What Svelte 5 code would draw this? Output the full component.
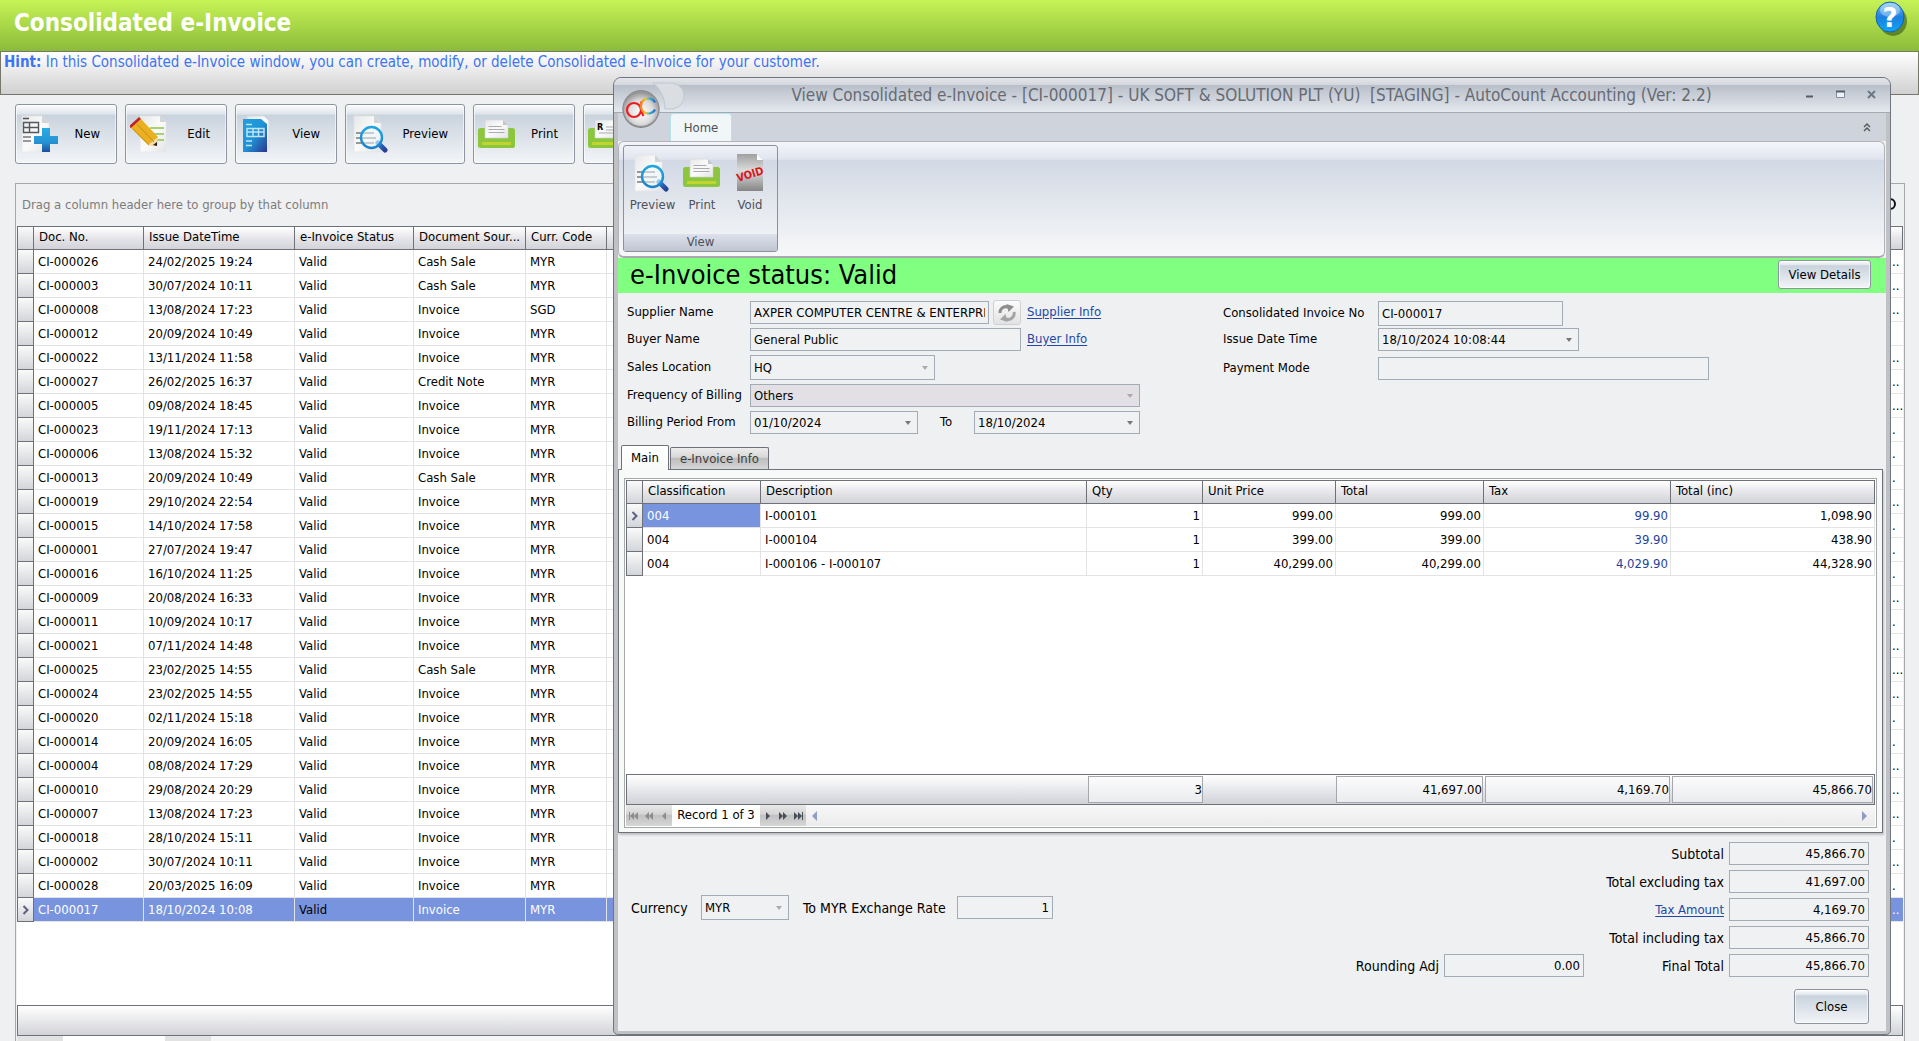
<script lang="ts">
  type Row = { no: string; issued: string; source: string; curr: string; tail: string };

  const raw: [string, string, string, string, number][] = [
    ['26', '24/02/2025 19:24', 'Cash Sale', 'MYR', 2],
    ['03', '30/07/2024 10:11', 'Cash Sale', 'MYR', 2],
    ['08', '13/08/2024 17:23', 'Invoice', 'SGD', 2],
    ['12', '20/09/2024 10:49', 'Invoice', 'MYR', 0],
    ['22', '13/11/2024 11:58', 'Invoice', 'MYR', 2],
    ['27', '26/02/2025 16:37', 'Credit Note', 'MYR', 2],
    ['05', '09/08/2024 18:45', 'Invoice', 'MYR', 3],
    ['23', '19/11/2024 17:13', 'Invoice', 'MYR', 1],
    ['06', '13/08/2024 15:32', 'Invoice', 'MYR', 1],
    ['13', '20/09/2024 10:49', 'Cash Sale', 'MYR', 1],
    ['19', '29/10/2024 22:54', 'Invoice', 'MYR', 2],
    ['15', '14/10/2024 17:58', 'Invoice', 'MYR', 1],
    ['01', '27/07/2024 19:47', 'Invoice', 'MYR', 1],
    ['16', '16/10/2024 11:25', 'Invoice', 'MYR', 1],
    ['09', '20/08/2024 16:33', 'Invoice', 'MYR', 2],
    ['11', '10/09/2024 10:17', 'Invoice', 'MYR', 1],
    ['21', '07/11/2024 14:48', 'Invoice', 'MYR', 2],
    ['25', '23/02/2025 14:55', 'Cash Sale', 'MYR', 3],
    ['24', '23/02/2025 14:55', 'Invoice', 'MYR', 2],
    ['20', '02/11/2024 15:18', 'Invoice', 'MYR', 1],
    ['14', '20/09/2024 16:05', 'Invoice', 'MYR', 1],
    ['04', '08/08/2024 17:29', 'Invoice', 'MYR', 2],
    ['10', '29/08/2024 20:29', 'Invoice', 'MYR', 2],
    ['07', '13/08/2024 17:23', 'Invoice', 'MYR', 2],
    ['18', '28/10/2024 15:11', 'Invoice', 'MYR', 1],
    ['02', '30/07/2024 10:11', 'Invoice', 'MYR', 2],
    ['28', '20/03/2025 16:09', 'Invoice', 'MYR', 1],
    ['17', '18/10/2024 10:08', 'Invoice', 'MYR', 2]
  ];

  const rows: Row[] = raw.map(([no, issued, source, curr, dots]) => ({
    no: `CI-0000${no}`,
    issued,
    source,
    curr,
    tail: '.'.repeat(dots)
  }));

  const lines = [
    { code: '004', desc: 'I-000101', qty: '1', price: '999.00', total: '999.00', tax: '99.90', inc: '1,098.90' },
    { code: '004', desc: 'I-000104', qty: '1', price: '399.00', total: '399.00', tax: '39.90', inc: '438.90' },
    { code: '004', desc: 'I-000106 - I-000107', qty: '1', price: '40,299.00', total: '40,299.00', tax: '4,029.90', inc: '44,328.90' }
  ];

  let selected = $state('CI-000017');
  let currentLine = $state(0);
</script>

<!-- Icons shared by the toolbar and the ribbon -->
{#snippet sheet()}
  <path d="M2 1h20l7 7v29H2z" fill="url(#paper)" stroke="#e2e4e6" stroke-width=".6" />
  <path d="M22 1v7h7z" fill="#d2d4d6" />
{/snippet}

{#snippet previewIcon()}
  <svg class="icon" viewBox="0 0 38 38" aria-hidden="true">
    {@render sheet()}
    <path d="M4 18h18M4 23h20M4 28h18" stroke="#77797c" stroke-width="1.6" />
    <path d="M26 28l7 7" stroke="url(#handle)" stroke-width="5" stroke-linecap="round" />
    <circle cx="19.500" cy="22.500" r="10.500" fill="#eef7fc" fill-opacity=".55" stroke="url(#lens)" stroke-width="2.400" />
  </svg>
{/snippet}

{#snippet printIcon(mark: string)}
  <svg class="icon" viewBox="0 0 38 38" aria-hidden="true">
    <rect x="0" y="13" width="37" height="20" rx="2.500" fill="#8cc63f" />
    <path d="M7 5h18l5 5v13H7z" fill="url(#paper)" stroke="#d3d5d7" stroke-width=".6" />
    <path d="M25 5v5h5z" fill="#c4c7c9" />
    {#if mark}
      <text x="9" y="15" class="mark">{mark}</text>
      <path d="M18 12h8M18 15h8M11 18h15" stroke="#a9abae" />
    {:else}
      <path d="M10.500 11.500h13M10.500 14.500h16M10.500 17.500h16" stroke="#a9abae" />
    {/if}
    <rect x="4" y="27" width="29" height="3" fill="#c0d62f" />
  </svg>
{/snippet}

{#snippet nav(kind: string, d: string)}
  <button class="nav" type="button" aria-label={kind}>
    <svg width="12" height="10" viewBox="0 0 12 10"><path {d} fill="currentColor" /></svg>
  </button>
{/snippet}

<svg class="defs" width="0" height="0" aria-hidden="true">
  <defs>
    <linearGradient id="paper" x1="0" y1="0" x2="1" y2="1">
      <stop offset="0" stop-color="#e6e7e8" /><stop offset=".5" stop-color="#fbfbfb" /><stop offset="1" stop-color="#e3e4e6" />
    </linearGradient>
    <linearGradient id="lens" x1="0" y1="0" x2="0" y2="1">
      <stop offset="0" stop-color="#22a6e0" /><stop offset="1" stop-color="#1b82cc" />
    </linearGradient>
    <linearGradient id="handle" x1="0" y1="0" x2="1" y2="1">
      <stop offset="0" stop-color="#2487cf" /><stop offset="1" stop-color="#2a3f97" />
    </linearGradient>
    <linearGradient id="blue" x1="0" y1="0" x2="1" y2="1">
      <stop offset="0" stop-color="#1f9fdf" /><stop offset=".5" stop-color="#1f93d6" /><stop offset="1" stop-color="#2a3690" />
    </linearGradient>
    <linearGradient id="cross" x1="0" y1="0" x2="0" y2="1">
      <stop offset="0" stop-color="#29abe2" /><stop offset=".6" stop-color="#2593d2" /><stop offset="1" stop-color="#1d4f9e" />
    </linearGradient>
    <linearGradient id="voidSheet" x1="0" y1="0" x2="0" y2="1">
      <stop offset="0" stop-color="#a0a0a0" /><stop offset=".45" stop-color="#dcdcdc" /><stop offset="1" stop-color="#858585" />
    </linearGradient>
    <radialGradient id="orb" cx=".5" cy=".6" r=".55">
      <stop offset="0" stop-color="#ffffff" /><stop offset=".6" stop-color="#dcdcdc" /><stop offset="1" stop-color="#949494" />
    </radialGradient>
    <linearGradient id="rainbow" x1="0" y1="0" x2="1" y2="0">
      <stop offset="0" stop-color="#f58220" /><stop offset=".35" stop-color="#f4c21c" /><stop offset=".6" stop-color="#39b6c9" /><stop offset="1" stop-color="#1b6fd0" />
    </linearGradient>
    <linearGradient id="ball" x1="0" y1="0" x2="0" y2="1">
      <stop offset="0" stop-color="#7fc0f2" /><stop offset=".5" stop-color="#1c7fe0" /><stop offset="1" stop-color="#12a6f5" />
    </linearGradient>
  </defs>
</svg>

<div class="page">
  <header class="banner">
    <h1>Consolidated e-Invoice</h1>
    <button class="help" type="button" aria-label="Help">
      <svg width="34" height="38" viewBox="0 0 34 38">
        <ellipse cx="18" cy="20" rx="14" ry="15" fill="#2c4a10" opacity=".55" />
        <ellipse cx="15" cy="16" rx="14" ry="15" fill="url(#ball)" stroke="#1263b5" />
        <ellipse cx="15" cy="9" rx="10" ry="7" fill="#fff" opacity=".35" />
        <text x="15" y="26" text-anchor="middle" class="question">?</text>
      </svg>
    </button>
  </header>

  <p class="hint"><b>Hint:</b> In this Consolidated e-Invoice window, you can create, modify, or delete Consolidated e-Invoice for your customer.</p>

  <div class="toolbar">
    <button class="tool glass" type="button">
      <svg class="icon" viewBox="0 0 38 38" aria-hidden="true">
        {@render sheet()}
        <path d="M3 3.500h6" stroke="#55585b" stroke-width="1.6" />
        <path d="M3.500 7.500h15v10h-15zM3.500 12.500h15M9.500 7.500v10" fill="none" stroke="#55585b" stroke-width="1.4" />
        <path d="M3 22h8M3 26h8" stroke="#77797c" stroke-width="1.6" />
        <path d="M22 13h8v8h8v8h-8v8h-8v-8h-8v-8h8z" fill="url(#cross)" />
      </svg>
      <span>New</span>
    </button>
    <button class="tool glass" type="button">
      <svg class="icon" viewBox="0 0 38 38" aria-hidden="true">
        <path d="M10 1h20l6 6v30H10z" fill="url(#paper)" stroke="#e2e4e6" stroke-width=".6" />
        <path d="M30 1v6h6z" fill="#d2d4d6" />
        <path d="M20 13h14M22 19h12M25 25h9" stroke="#8cc63f" stroke-width="1.6" />
        <path d="M0 12L10 3l18 19-1 9-9-1z" fill="#eab022" />
        <path d="M18 30l10-8-1 9z" fill="#f3dcae" />
        <path d="M23 30l4-3v4z" fill="#222" />
        <path d="M3 14l16 16M7 9l17 18" stroke="#c98f10" stroke-width="1" />
        <path d="M0 12L10 3" stroke="#c1202b" stroke-width="2.600" />
      </svg>
      <span>Edit</span>
    </button>
    <button class="tool glass" type="button">
      <svg class="icon" viewBox="0 0 38 38" aria-hidden="true">
        <path d="M7 1h17l5 5v28H7z" fill="url(#paper)" stroke="#d5d8da" stroke-width=".8" />
        <path d="M3 4h18l6 5v28H3z" fill="url(#blue)" />
        <path d="M6 9.500h6M6 26h6M6 30.500h6" stroke="#bfe4f6" stroke-width="1.5" />
        <path d="M7 13.500h17v8H7zM7 17h17M13 13.500v8M18.500 13.500v8" fill="none" stroke="#bfe4f6" stroke-width="1.5" />
      </svg>
      <span>View</span>
    </button>
    <button class="tool wide glass" type="button">{@render previewIcon()}<span>Preview</span></button>
    <button class="tool glass" type="button">{@render printIcon('')}<span>Print</span></button>
    <button class="tool glass" type="button">{@render printIcon('R')}<span>Print</span></button>
  </div>

  <section class="list">
    <div class="group-bar">
      <span>Drag a column header here to group by that column</span>
      <svg width="18" height="18" viewBox="0 0 18 18" aria-hidden="true">
        <circle cx="11" cy="8" r="5" fill="none" stroke="#111" stroke-width="2" />
        <path d="M7 12l-5 5" stroke="#111" stroke-width="2" />
      </svg>
    </div>
    <div class="list-body">
      <table class="grid">
        <colgroup>
          <col class="w-mark" /><col class="w-no" /><col class="w-date" /><col class="w-status" /><col class="w-source" /><col class="w-curr" /><col /><col class="w-tail" />
        </colgroup>
        <thead>
          <tr>
            <th></th><th>Doc. No.</th><th>Issue DateTime</th><th>e-Invoice Status</th><th>Document Sour...</th><th>Curr. Code</th><th></th><th></th>
          </tr>
        </thead>
        <tbody>
          {#each rows as row (row.no)}
            <tr class:selected={row.no === selected} onclick={() => (selected = row.no)}>
              <td class="marker">
                {#if row.no === selected}
                  <svg width="8" height="10" viewBox="0 0 8 10"><path d="M1.500 1l4 4-4 4" fill="none" stroke="#5f5f86" stroke-width="2" /></svg>
                {/if}
              </td>
              <td>{row.no}</td>
              <td>{row.issued}</td>
              <td class="status">Valid</td>
              <td>{row.source}</td>
              <td>{row.curr}</td>
              <td></td>
              <td class="tail">{row.tail}</td>
            </tr>
          {/each}
        </tbody>
      </table>
    </div>
    <div class="list-footer"></div>
    <div class="list-pager"><i></i><i class="record"></i><i></i></div>
  </section>

  <div class="dialog" role="dialog" aria-labelledby="dialog-title">
    <div class="titlebar">
      <h2 id="dialog-title">View Consolidated e-Invoice - [CI-000017] - UK SOFT &amp; SOLUTION PLT (YU)&nbsp; [STAGING] - AutoCount Accounting (Ver: 2.2)</h2>
      <div class="window-buttons">
        <button type="button" aria-label="Minimize"><svg width="9" height="10" viewBox="0 0 9 10"><path d="M1 6.500h7" stroke="#555d68" stroke-width="2" /></svg></button>
        <button type="button" aria-label="Maximize"><svg width="9" height="10" viewBox="0 0 9 10"><path d="M.5 1.500h8v6h-8z" fill="#eef2f6" stroke="#7f8fa5" /><path d="M0 1.500h9" stroke="#555d68" stroke-width="2" /></svg></button>
        <button type="button" aria-label="Close window"><svg width="9" height="10" viewBox="0 0 9 10"><path d="M1 1l7 7M8 1L1 8" stroke="#6a7789" stroke-width="2" /></svg></button>
      </div>
    </div>
    <svg class="quick" width="32" height="28" viewBox="0 0 32 28" aria-hidden="true">
      <path d="M0 1h20q11 3 11 13t-11 13h-8Q12 10 0 1z" fill="#dadde1" stroke="#c3c8ce" />
    </svg>
    <button class="orb" type="button" aria-label="Application menu">
      <svg width="40" height="40" viewBox="0 0 40 40">
        <circle cx="20" cy="20.500" r="18.500" fill="#4c4f54" opacity=".6" />
        <circle cx="20" cy="19.500" r="18" fill="url(#orb)" stroke="#8b8d90" />
        <circle cx="13" cy="21" r="7" fill="none" stroke="#ed1c24" stroke-width="2.200" />
        <path d="M20.500 12.500q-2 8 2 14.500" fill="none" stroke="#ed1c24" stroke-width="2.200" />
        <path d="M34 13.500a7.500 7.500 0 1 0 0 7" fill="none" stroke="url(#rainbow)" stroke-width="2.200" />
      </svg>
    </button>

    <div class="content">
      <nav class="ribbon-tabs">
        <button class="ribbon-tab" type="button">Home</button>
        <button class="collapse" type="button" aria-label="Collapse ribbon">
          <svg width="8" height="9" viewBox="0 0 8 9"><path d="M1 4l3-3 3 3M1 8l3-3 3 3" fill="none" stroke="#555" stroke-width="1.4" /></svg>
        </button>
      </nav>

      <div class="ribbon">
        <div class="ribbon-group">
          <div class="ribbon-items">
            <button class="ribbon-item" type="button">{@render previewIcon()}Preview</button>
            <button class="ribbon-item" type="button">{@render printIcon('')}Print</button>
            <button class="ribbon-item" type="button">
              <svg class="icon" viewBox="0 0 38 38" aria-hidden="true">
                <path d="M6 0h20l6 6v31H6z" fill="url(#voidSheet)" />
                <path d="M26 0v6h6z" fill="#fff" />
                <text x="19" y="24" text-anchor="middle" transform="rotate(-17 19 20)" class="void">VOID</text>
              </svg>Void
            </button>
          </div>
          <div class="ribbon-caption">View</div>
        </div>
      </div>

      <div class="status-bar">
        <strong>e-Invoice status: Valid</strong>
        <button class="details glass" type="button">View Details</button>
      </div>

      <form class="form" onsubmit={(e) => e.preventDefault()}>
        <div class="column">
          <div class="field">
            <label for="supplier">Supplier Name</label>
            <input id="supplier" class="w239" readonly value="AXPER COMPUTER CENTRE & ENTERPRI" />
            <button class="refresh" type="button" aria-label="Refresh supplier">
              <svg width="20" height="18" viewBox="0 0 20 18">
                <path d="M3 9a6 6 0 0 1 9-5.500" fill="none" stroke="#8e8e8e" stroke-width="3" />
                <path d="M9.500 0L17 2.500 11.500 8z" fill="#8e8e8e" />
                <path d="M17 8a6 6 0 0 1-9 6.500" fill="none" stroke="#a4a4a4" stroke-width="3" />
                <path d="M10.500 18L3 15.500 8.500 10z" fill="#a4a4a4" />
              </svg>
            </button>
            <a href="#supplier">Supplier Info</a>
          </div>
          <div class="field">
            <label for="buyer">Buyer Name</label>
            <input id="buyer" class="w271" readonly value="General Public" />
            <a href="#buyer">Buyer Info</a>
          </div>
          <div class="field high">
            <label for="location">Sales Location</label>
            <select id="location" class="w185 tall pale"><option>HQ</option></select>
          </div>
          <div class="field">
            <label for="frequency">Frequency of Billing</label>
            <select id="frequency" class="w390 shaded pale"><option>Others</option></select>
          </div>
          <div class="field">
            <label for="from">Billing Period From</label>
            <select id="from" class="w168"><option>01/10/2024</option></select>
            <label class="to" for="to">To</label>
            <select id="to" class="w166"><option>18/10/2024</option></select>
          </div>
        </div>
        <div class="column right">
          <div class="field high">
            <label for="invoice-no">Consolidated Invoice No</label>
            <input id="invoice-no" class="w185 tall" readonly value="CI-000017" />
          </div>
          <div class="field">
            <label for="issued">Issue Date Time</label>
            <select id="issued" class="w201"><option>18/10/2024 10:08:44</option></select>
          </div>
          <div class="field">
            <label for="payment">Payment Mode</label>
            <input id="payment" class="w331" readonly value="" />
          </div>
        </div>
      </form>

      <div class="tabs">
        <button class="tab active" type="button">Main</button>
        <button class="tab" type="button">e-Invoice Info</button>
      </div>

      <div class="tab-page">
        <div class="detail">
          <div class="detail-body">
            <table class="grid">
              <colgroup>
                <col class="w-mark" /><col class="w-class" /><col /><col class="w-qty" /><col class="w-price" /><col class="w-total" /><col class="w-tax" /><col class="w-inc" />
              </colgroup>
              <thead>
                <tr>
                  <th></th><th>Classification</th><th>Description</th><th>Qty</th><th>Unit Price</th><th>Total</th><th>Tax</th><th>Total (inc)</th>
                </tr>
              </thead>
              <tbody>
                {#each lines as line, i}
                  <tr onclick={() => (currentLine = i)}>
                    <td class="marker">
                      {#if i === currentLine}
                        <svg width="8" height="10" viewBox="0 0 8 10"><path d="M1.500 1l4 4-4 4" fill="none" stroke="#5f5f86" stroke-width="2" /></svg>
                      {/if}
                    </td>
                    <td class:focused={i === currentLine}>{line.code}</td>
                    <td>{line.desc}</td>
                    <td class="num">{line.qty}</td>
                    <td class="num">{line.price}</td>
                    <td class="num">{line.total}</td>
                    <td class="num tax">{line.tax}</td>
                    <td class="num">{line.inc}</td>
                  </tr>
                {/each}
              </tbody>
            </table>
          </div>
          <div class="summary">
            <output class="s-qty">3</output>
            <output class="s-total">41,697.00</output>
            <output class="s-tax">4,169.70</output>
            <output class="s-inc">45,866.70</output>
          </div>
          <div class="navigator">
            <div class="nav-group first">
              {@render nav('First', 'M1 1h1v8H1zM6 1v8L2 5zM10 1v8L6 5z')}
              {@render nav('Previous page', 'M6 1v8L2 5zM10 1v8L6 5z')}
              {@render nav('Previous', 'M8 1v8L4 5z')}
            </div>
            <span>Record 1 of 3</span>
            <div class="nav-group">
              {@render nav('Next', 'M4 1v8l4-4z')}
              {@render nav('Next page', 'M2 1v8l4-4zM6 1v8l4-4z')}
              {@render nav('Last', 'M2 1v8l4-4zM6 1v8l4-4zM10 1h1v8h-1z')}
            </div>
            <div class="scroll">
              {@render nav('Scroll left', 'M8 0v10L3 5z')}
              {@render nav('Scroll right', 'M4 0v10l5-5z')}
            </div>
          </div>
        </div>
      </div>

      <div class="bottom">
        <div class="currency">
          <label for="currency">Currency</label>
          <select id="currency" class="w88 tall pale"><option>MYR</option></select>
          <label class="rate-label" for="rate">To MYR Exchange Rate</label>
          <input id="rate" class="w96 num" readonly value="1" />
        </div>
        <div class="totals">
          <div class="rounding">
            <label for="rounding">Rounding Adj</label>
            <input id="rounding" class="w140 num" readonly value="0.00" />
          </div>
          <div class="amounts">
            <label for="subtotal">Subtotal</label>
            <input id="subtotal" class="num" readonly value="45,866.70" />
            <label for="excl">Total excluding tax</label>
            <input id="excl" class="num" readonly value="41,697.00" />
            <a href="#tax">Tax Amount</a>
            <input id="tax" class="num" aria-label="Tax Amount" readonly value="4,169.70" />
            <label for="incl">Total including tax</label>
            <input id="incl" class="num" readonly value="45,866.70" />
            <label for="final">Final Total</label>
            <input id="final" class="num" readonly value="45,866.70" />
          </div>
        </div>
        <button class="close glass" type="button">Close</button>
      </div>
    </div>
  </div>
</div>

<style>
  :global(body) {
    background: #eff0f2;
  }

  .page {
    position: relative;
    display: flex;
    flex-direction: column;
    height: 100vh;
    overflow: hidden;
    background: #eff0f2;
    color: #000;
    font: 13px/16px 'DejaVu Sans Condensed', 'Noto Sans', sans-serif;
  }

  .page *,
  .page *::before {
    box-sizing: border-box;
  }

  .defs {
    position: absolute;
  }

  button,
  input,
  select {
    margin: 0;
    padding: 0;
    border: 0;
    border-radius: 0;
    background: none;
    color: inherit;
    font: inherit;
  }

  button {
    display: flex;
    align-items: center;
    justify-content: center;
  }

  svg {
    display: block;
    flex: none;
  }

  .glass {
    border: 1px solid #8e95a1;
    border-radius: 3px;
    background: linear-gradient(#fdfdfe 0, #dde4ea 16%, #c9d3dd 17%, #dce2e9 55%, #f3f5f7 100%);
    box-shadow: inset 0 0 0 1px rgba(255, 255, 255, 0.6);
  }

  .icon {
    width: 38px;
    height: 38px;
  }

  /* Header */
  .banner {
    display: flex;
    align-items: flex-start;
    justify-content: space-between;
    flex: none;
    height: 51px;
    padding: 1px 10px 0 14px;
    background: linear-gradient(#c6f356, #8bbb3a);
  }

  h1 {
    margin: 7px 0 0;
    color: #fff;
    font-size: 24px;
    line-height: 30px;
  }

  .question {
    fill: #fff;
    font: bold 26px 'DejaVu Sans', sans-serif;
  }

  .mark {
    font: bold 9px 'DejaVu Sans Condensed', sans-serif;
  }

  .void {
    fill: #d8151c;
    font: bold 11px 'DejaVu Sans Condensed', sans-serif;
  }

  .hint {
    flex: none;
    height: 44px;
    margin: 0;
    padding: 0 3px;
    border: 1px solid #77766a;
    background: linear-gradient(#fff, #d0d0d0);
    color: #3c74f2;
    font-size: 15px;
    line-height: 20px;
  }

  .toolbar {
    display: flex;
    flex: none;
    gap: 8px;
    padding: 9px 15px 0;
  }

  .tool {
    justify-content: space-between;
    width: 102px;
    height: 60px;
    padding: 0 16px 0 4px;
  }

  .tool.wide {
    width: 120px;
    padding-left: 6px;
  }

  /* Invoice list */
  .list {
    display: flex;
    flex: 1;
    flex-direction: column;
    min-height: 0;
    margin: 19px 14px 0 15px;
    padding: 0 1px;
    border: 1px solid #a5a9ab;
    border-bottom: 0;
  }

  .group-bar {
    display: flex;
    align-items: center;
    justify-content: space-between;
    flex: none;
    height: 42px;
    padding: 0 6px 0 5px;
    color: #7c7c7c;
  }

  .list-body {
    flex: 1;
    min-height: 0;
    overflow: hidden;
    background: #fff;
  }

  .list-footer {
    flex: none;
    height: 31px;
    border: 1px solid #6e7178;
    background: linear-gradient(#fff, #d2d3d8);
  }

  .list-pager {
    display: flex;
    flex: none;
    height: 5px;
    background: #f6f6f7;
  }

  .list-pager i {
    width: 46px;
    background: #e2e2e3;
  }

  .list-pager .record {
    width: 102px;
    background: #fff;
  }

  .grid {
    width: 100%;
    border-spacing: 0;
    table-layout: fixed;
  }

  .grid th,
  .grid td {
    overflow: hidden;
    height: 24px;
    padding: 0 2px 0 4px;
    border: solid #e3e3e3;
    border-width: 0 1px 1px 0;
    text-align: left;
    white-space: nowrap;
  }

  .grid th {
    padding: 0 0 2px 5px;
    border-color: #6e7178;
    border-top-width: 1px;
    background: linear-gradient(#fff, #e6e6ea 50%, #d2d3d8);
    font-weight: normal;
  }

  .grid th:first-child,
  .grid .marker {
    padding: 0 0 0 4px;
    border-color: #6e7178;
    border-left: 1px solid #6e7178;
    background: linear-gradient(#fafafa, #d4d5da);
  }

  .grid .num {
    text-align: right;
  }

  .grid .tax {
    color: #1f3f9f;
  }

  .grid .tail {
    padding: 0 0 0 1px;
    border-right: 0;
  }

  .grid .selected td:not(.marker),
  .grid .focused {
    background: #7994de;
    color: #fff;
  }

  .grid .selected td.status:not(.marker) {
    color: #000;
  }

  .w-mark { width: 17px; }
  .w-no { width: 110px; }
  .w-date { width: 151px; }
  .w-status { width: 119px; }
  .w-source { width: 112px; }
  .w-curr { width: 81px; }
  .w-tail { width: 12px; }
  .w-class { width: 118px; }
  .w-qty { width: 116px; }
  .w-price { width: 133px; }
  .w-total { width: 148px; }
  .w-tax { width: 187px; }
  .w-inc { width: 204px; }

  /* Dialog window */
  .dialog {
    position: absolute;
    top: 77px;
    right: 28px;
    bottom: 6px;
    left: 613px;
    display: flex;
    flex-direction: column;
    border: 1px solid #6f7680;
    border-radius: 8px 8px 5px 5px;
    background: #bfc1c5;
  }

  .titlebar {
    display: flex;
    align-items: center;
    flex: none;
    height: 35px;
    padding: 0 10px 0 89px;
    border-bottom: 1px solid #a5a9b3;
    border-radius: 7px 7px 0 0;
    background: linear-gradient(#e4e6ea 0, #d3d6db 20%, #b9bfc9 21%, #e4e8ef 100%);
  }

  h2 {
    flex: 1;
    overflow: hidden;
    margin: 0;
    color: #666b73;
    font-size: 17px;
    font-weight: normal;
    line-height: 20px;
    text-align: center;
    white-space: nowrap;
  }

  .window-buttons {
    display: flex;
    gap: 13px;
  }

  .window-buttons button {
    width: 18px;
    height: 18px;
  }

  .quick {
    position: absolute;
    top: 4px;
    left: 39px;
  }

  .orb {
    position: absolute;
    top: 11px;
    left: 7px;
  }

  .content {
    display: flex;
    flex: 1;
    flex-direction: column;
    min-height: 0;
    margin: 0 4px 3px;
    background: #eff0f2;
  }

  .ribbon-tabs {
    display: flex;
    align-items: center;
    justify-content: space-between;
    flex: none;
    height: 28px;
    padding: 0 15px 0 52px;
    background: #cfd3dc;
  }

  .ribbon-tab {
    align-self: flex-end;
    width: 62px;
    height: 28px;
    border: 1px solid #b5e3ea;
    border-bottom: 0;
    border-radius: 4px 4px 0 0;
    background: #f1f6f8;
    color: #4c5058;
  }

  .ribbon {
    flex: none;
    height: 117px;
    margin-right: 1px;
    padding: 3px 4px;
    border: 1px solid #b2b3b8;
    border-bottom: 2px solid #a9aaaf;
    border-radius: 6px;
    background: linear-gradient(#f5f6fc 0, #e1e5ef 15%, #d2d9e5 16%, #f7f8f8 100%);
  }

  .ribbon-group {
    display: flex;
    flex-direction: column;
    width: 155px;
    height: 107px;
    border: 1px solid #8d9096;
    border-radius: 3px;
  }

  .ribbon-items {
    display: flex;
    flex: 1;
    padding: 8px 3px 0;
  }

  .ribbon-item {
    flex-direction: column;
    justify-content: flex-start;
    gap: 5px;
    width: 49px;
    color: #4c5058;
  }

  .ribbon-item:first-child {
    width: 52px;
  }

  .ribbon-caption {
    height: 17px;
    background: linear-gradient(#dde1ec, #bfc5d1);
    color: #4c5058;
    text-align: center;
  }

  .status-bar {
    display: flex;
    align-items: center;
    justify-content: space-between;
    flex: none;
    height: 35px;
    padding: 0 15px 2px 12px;
    background: #80ff80;
  }

  .status-bar strong {
    font-size: 27px;
    font-weight: normal;
    line-height: 33px;
  }

  .details {
    width: 93px;
    height: 29px;
  }

  /* Invoice form */
  .form {
    display: grid;
    flex: none;
    grid-template-columns: minmax(0, 605px) 1fr;
    padding: 8px 0 11px;
  }

  .column {
    display: grid;
    align-content: start;
    gap: 4px;
    padding-left: 9px;
  }

  .column.right {
    grid-template-rows: 23px 25px 23px;
    align-items: start;
    padding-left: 0;
  }

  .field {
    display: flex;
    align-items: center;
    height: 23px;
  }

  .field.high {
    height: 25px;
  }

  .field label {
    width: 123px;
    margin-bottom: 2px;
  }

  .right .field label {
    width: 155px;
  }

  .field .to {
    width: 56px;
    padding-left: 22px;
  }

  input,
  select {
    height: 23px;
    padding: 0 3px;
    border: 1px solid #a3acb5;
    background-color: #f0f1f2;
  }

  input.num {
    text-align: right;
  }

  select {
    appearance: none;
    background-image: url("data:image/svg+xml,%3Csvg xmlns='http://www.w3.org/2000/svg' width='6' height='4'%3E%3Cpath d='M0 0h6L3 4z' fill='%23777'/%3E%3C/svg%3E");
    background-position: right 6px center;
    background-repeat: no-repeat;
  }

  select.pale {
    background-image: url("data:image/svg+xml,%3Csvg xmlns='http://www.w3.org/2000/svg' width='6' height='4'%3E%3Cpath d='M0 0h6L3 4z' fill='%23aaa'/%3E%3C/svg%3E");
  }

  .shaded {
    background-color: #e2e0e5;
  }

  .tall { height: 25px; }
  .w88 { width: 88px; }
  .w96 { width: 96px; }
  .w140 { width: 140px; }
  .w166 { width: 166px; }
  .w168 { width: 168px; }
  .w185 { width: 185px; }
  .w201 { width: 201px; }
  .w239 { width: 239px; }
  .w271 { width: 271px; }
  .w331 { width: 331px; }
  .w390 { width: 390px; }

  .refresh {
    width: 28px;
    height: 25px;
    margin: 0 0 0 4px;
    border: 1px solid #cfd0d2;
    border-radius: 3px;
    background: linear-gradient(#fcfcfc, #e2e2e4);
  }

  a {
    color: #2148a8;
    text-underline-offset: 2px;
  }

  .field a {
    margin: 0 0 2px 6px;
  }

  /* Tabs and detail grid */
  .tabs {
    display: flex;
    align-items: flex-end;
    flex: none;
    gap: 1px;
    padding-left: 3px;
  }

  .tab {
    width: 99px;
    height: 22px;
    border: 1px solid #6e7178;
    border-bottom: 0;
    border-radius: 2px 2px 0 0;
    background: linear-gradient(#ececec, #d8d8d8 45%, #bcbcbc 46%, #d6d6d6);
    color: #3c3c3c;
  }

  .tab.active {
    position: relative;
    width: 48px;
    height: 25px;
    margin-bottom: -1px;
    background: linear-gradient(#fff, #f8faf9);
    color: #000;
  }

  .tab-page {
    display: flex;
    flex: 1;
    min-height: 0;
    margin-right: 3px;
    padding: 8px 5px 4px;
    border: 1px solid #6e7178;
    background: #f8faf9;
    box-shadow: 1px 2px 2px rgba(0, 0, 0, 0.2);
  }

  .detail {
    display: flex;
    flex: 1;
    flex-direction: column;
    min-width: 0;
    padding: 1px;
    border: 1px solid #a6a9ab;
    background: #fff;
  }

  .detail-body {
    flex: 1;
    min-height: 0;
  }

  .summary {
    display: flex;
    align-items: center;
    justify-content: flex-end;
    flex: none;
    gap: 2px;
    height: 31px;
    padding-right: 1px;
    border: 1px solid #6e7178;
    background: linear-gradient(#fff, #d0d2d8);
  }

  output {
    height: 27px;
    border: 1px solid #a5a7ad;
    background: linear-gradient(#fcfcfd, #eaebed);
    line-height: 25px;
    text-align: right;
  }

  .s-qty {
    width: 115px;
    margin-right: 131px;
  }

  .s-total { width: 147px; }
  .s-tax { width: 185px; }
  .s-inc { width: 201px; }

  .navigator {
    display: flex;
    flex: none;
    height: 21px;
    line-height: 20px;
  }

  .navigator span {
    width: 88px;
    text-align: center;
    white-space: nowrap;
  }

  .nav-group {
    display: flex;
    align-items: center;
    gap: 1px;
    padding: 0 1px;
    background: linear-gradient(#e8e8e8, #d4d4d4 45%, #c0c0c0 46%, #d6d6d6);
    color: #474e58;
  }

  .nav-group.first {
    color: #8c8c8c;
  }

  .nav {
    width: 14px;
    height: 21px;
  }

  .scroll {
    display: flex;
    flex: 1;
    justify-content: space-between;
    padding: 0 4px 0 2px;
    background: linear-gradient(#f8f8f8, #ebebec);
    color: #8e9cc6;
  }

  /* Totals */
  .bottom {
    display: grid;
    flex: none;
    grid-template-columns: 1fr auto;
    row-gap: 12px;
    padding: 9px 17px 7px 13px;
  }

  .currency {
    display: flex;
    align-items: center;
    align-self: start;
    padding-top: 53px;
    font-size: 14px;
  }

  .currency label {
    width: 70px;
  }

  .currency .rate-label {
    width: 168px;
    padding-left: 14px;
    white-space: nowrap;
  }

  .totals {
    display: flex;
    align-items: flex-end;
  }

  .rounding {
    display: flex;
    align-items: center;
    gap: 5px;
    font-size: 14px;
  }

  .amounts {
    display: grid;
    align-items: center;
    grid-template-columns: 140px 140px;
    gap: 5px;
    text-align: right;
  }

  .amounts label {
    font-size: 14px;
  }

  .bottom input,
  .bottom select {
    padding: 0 3px;
    font-size: 13px;
  }

  .close {
    grid-column: 2;
    justify-self: end;
    width: 75px;
    height: 35px;
  }
</style>
